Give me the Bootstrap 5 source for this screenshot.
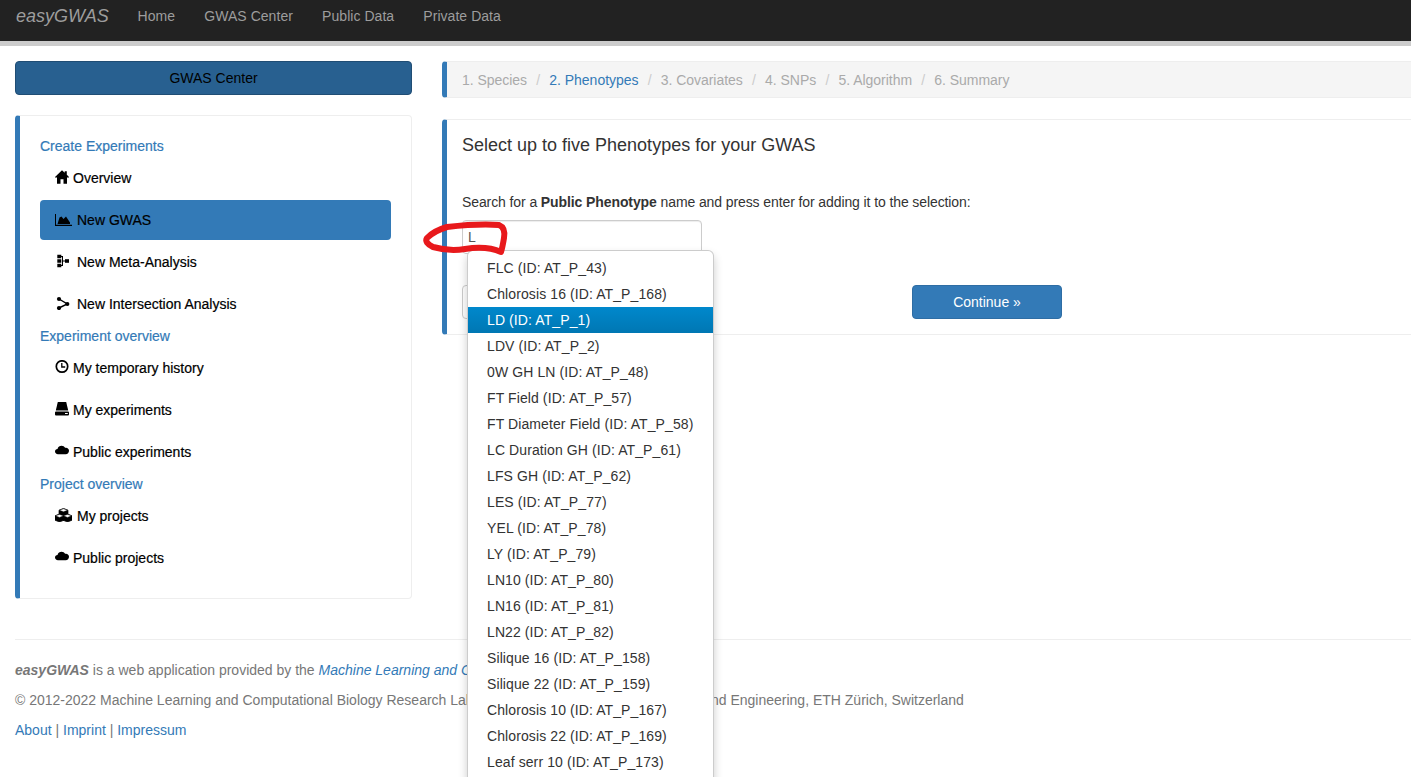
<!DOCTYPE html>
<html lang="en">
<head>
<meta charset="utf-8">
<title>easyGWAS</title>
<link rel="stylesheet" href="https://cdn.jsdelivr.net/npm/bootstrap@5.3.0/dist/css/bootstrap.min.css">
<style>
html,body{height:777px;overflow:hidden}
body{font-family:"Liberation Sans",Arial,sans-serif;font-size:14px;line-height:20px;color:#333;background:#fff;position:relative}
.topbar{background:#222;height:46px;border-bottom:5px solid #ccc;padding:0 15px;align-items:flex-start;flex-wrap:nowrap;justify-content:flex-start}
.topbar .navbar-brand{font-size:18px;font-style:italic;color:#9d9d9d;padding:6px 0 0;margin:0 13px 0 0;line-height:20px;width:94px}
.topbar.navbar-expand .navbar-nav .nav-link{color:#9d9d9d;padding:6px 14.6px 0;line-height:20px;letter-spacing:.04px}
.shell{padding:15px 15px 0;gap:30px;width:1600px}
.leftcol{width:397px;flex:none}
.titlebtn{display:block;width:100%;height:34px;background:#286090;border:1px solid #204d74;color:#000;font-size:14px;line-height:20px;padding:6px 12px;border-radius:4px;margin-bottom:20px}
.sidepanel{height:484px;border:1px solid #eee;border-left:5px solid #337ab7;border-radius:4px;padding:20px}
.sidehead{color:#337ab7;font-weight:400;font-size:14px;line-height:20px;margin:2px 0 0;-webkit-text-stroke:.2px #337ab7}
.sidehead:first-child{margin-top:0}
.sidepanel .nav-link{color:#000;height:40px;margin-top:2px;padding:10px 15px;line-height:20px;border-radius:4px;display:flex;align-items:center;-webkit-text-stroke:.2px #000}
.sidepanel .nav-link.active{background:#337ab7;color:#000}
.ico{flex:none;display:block;margin-right:4px;position:relative;top:-1px}
.ico.wide{margin-right:5px}
.maincol{width:1000px;flex:none}
.crumbs{height:37px;background:#f5f5f5;border-left:5px solid #337ab7;border-radius:4px;padding:8px 15px;margin:0 0 21px;color:#aaa;border-bottom:1px solid #eee;border-top:1px solid #eee}
.crumbs .breadcrumb{margin:0;--bs-breadcrumb-divider-color:#ccc;--bs-breadcrumb-item-padding-x:9.2px;line-height:20px;font-size:14px;letter-spacing:-.03px}
.crumbs .breadcrumb-item{color:#aaa}
.crumbs .breadcrumb-item::before{color:#ccc}
.crumbs .breadcrumb-item.current-step{color:#337ab7}
.stepbox{height:216px;border-top:1px solid #eee;border-bottom:1px solid #eee;border-left:5px solid #337ab7;border-radius:4px 0 0 4px;padding:0 15px;position:relative}
.stepbox h4{font-size:18px;font-weight:400;line-height:20px;color:#333;margin:15px 0 0}
.stepbox p{font-size:14px;line-height:20px;margin:37px 0 8px;letter-spacing:-.1px}
.stepbox .form-control{width:240px;height:34px;font-size:14px;padding:6px 5px;border-color:#ccc;border-radius:4px;color:#555;line-height:20px;box-shadow:inset 0 1px 1px rgba(0,0,0,.075)}
.btnrow{gap:300px;margin-top:31px}
.wizbtn{width:150px;height:34px;font-size:14px;line-height:20px;padding:6px 12px;border-radius:4px}
.wizbtn.backbtn{background:#fff;border:1px solid #ccc;color:#333}
.wizbtn.nextbtn{background:#337ab7;border:1px solid #2e6da4;color:#fff}
.footarea{width:1600px;margin:40px 15px 0;border-top:1px solid #eee;padding-top:20px;color:#777}
.footarea p{margin:0 0 10px;line-height:20px}
.footarea a{color:#337ab7;text-decoration:none}
.suggest{position:absolute;left:467px;top:250px;width:247px;margin:0;padding:4px 0 10px;border:1px solid rgba(0,0,0,.2);border-radius:6px;box-shadow:0 5px 10px rgba(0,0,0,.2);background:#fff;display:block;font-size:14px;min-width:0;z-index:10}
.suggest .dropdown-item{padding:3px 19px;line-height:20px;color:#333;font-size:14px;letter-spacing:.1px}
.suggest .dropdown-item.active{background:linear-gradient(#08c,#0077b3);color:#fff}
.scribble{position:absolute;left:415px;top:215px;z-index:20;pointer-events:none}
</style>
</head>
<body>
<nav class="navbar navbar-expand topbar p-0 px-3 d-flex">
  <a class="navbar-brand" href="#">easyGWAS</a>
  <ul class="navbar-nav flex-row">
    <li class="nav-item"><a class="nav-link" href="#">Home</a></li>
    <li class="nav-item"><a class="nav-link" href="#">GWAS Center</a></li>
    <li class="nav-item"><a class="nav-link" href="#">Public Data</a></li>
    <li class="nav-item"><a class="nav-link" href="#">Private Data</a></li>
  </ul>
</nav>
<div class="d-flex shell">
  <div class="leftcol">
    <button class="titlebtn" type="button">GWAS Center</button>
    <div class="sidepanel">
      <h6 class="sidehead">Create Experiments</h6>
      <ul class="nav flex-column">
        <li class="nav-item"><a class="nav-link" href="#"><svg class="ico" width="14" height="14" viewBox="0 0 14 14"><path d="M7 .2 0 7l1 1 1-1V13.800H5.500V9.200h3v4.600H12V7l1 1 1-1-2.200-2.200V1.200H9.700v1.500Z"/></svg>Overview</a></li>
        <li class="nav-item"><a class="nav-link active" href="#"><svg class="ico wide" width="17" height="14" viewBox="0 0 17 14"><path d="M0 2h1v10.800h16V14H0Z"/><path d="M2.500 12 4.500 5.500 6.500 4.500 8.500 7 11 4.500 15 10.500V12Z"/></svg>New GWAS</a></li>
        <li class="nav-item"><a class="nav-link" href="#"><svg class="ico wide" width="17" height="14" viewBox="0 0 17 14"><path d="M2.300 .8h4v3.400h-4ZM2.300 5.300h4v3.400h-4ZM2.300 9.800h4v3.400h-4Z"/><path d="M6 2h2v10H6v-1h1V3H6ZM7 6.500h3v1H7Z"/><path d="M10 5.200h4v3.600h-4Z"/></svg>New Meta-Analysis</a></li>
        <li class="nav-item"><a class="nav-link" href="#"><svg class="ico wide" width="17" height="14" viewBox="0 0 17 14"><circle cx="4" cy="3" r="2.100"/><circle cx="4" cy="12" r="2.100"/><circle cx="12.300" cy="8" r="2.100"/><path d="M4 3 12.300 8 4 12" fill="none" stroke="#000" stroke-width="1.400"/></svg>New Intersection Analysis</a></li>
      </ul>
      <h6 class="sidehead">Experiment overview</h6>
      <ul class="nav flex-column">
        <li class="nav-item"><a class="nav-link" href="#"><svg class="ico" width="14" height="14" viewBox="0 0 14 14"><circle cx="7" cy="6.500" r="5.700" fill="none" stroke="#000" stroke-width="1.700"/><path d="M6.800 3v4h3.400" fill="none" stroke="#000" stroke-width="1.300"/></svg>My temporary history</a></li>
        <li class="nav-item"><a class="nav-link" href="#"><svg class="ico" width="14" height="14" viewBox="0 0 14 14"><path d="M2.800 0h8.400L13.200 8.600H.8Z"/><path fill-rule="evenodd" d="M1 9.600h12q1 0 1 1v2q0 1-1 1H1q-1 0-1-1v-2q0-1 1-1ZM10 11v1h2.800v-1Z"/></svg>My experiments</a></li>
        <li class="nav-item"><a class="nav-link" href="#"><svg class="ico" width="14" height="14" viewBox="0 0 14 14"><path d="M3 10.200C1.200 10.200 0 9.100 0 7.600 0 6.200 1 5.100 2.500 5 3 3 4.700 1.800 6.600 1.800c1.500 0 2.800.8 3.500 2 .3-.1.600-.1.900-.1 1.700 0 3 1.300 3 3.100 0 1.900-1.400 3.400-3.300 3.400Z"/></svg>Public experiments</a></li>
      </ul>
      <h6 class="sidehead">Project overview</h6>
      <ul class="nav flex-column">
        <li class="nav-item"><a class="nav-link" href="#"><svg class="ico wide" width="17" height="14" viewBox="0 0 17 14"><g stroke="#000" stroke-width=".7" stroke-linejoin="round"><path d="M8.500.4 13 2.200v4.600L8.500 8.600 4 6.800V2.200Z" fill="#000"/><path d="M4.500 6 9 7.800v4.400L4.500 14 0 12.200V7.800Z" fill="#000"/><path d="M12.500 6 17 7.800v4.400L12.500 14 8 12.200V7.800Z" fill="#000"/><path d="M8.500.8 12.500 2.200 8.500 3.800 4.500 2.200ZM4.500 6.400 8.500 7.800 4.500 9.400.5 7.800ZM12.500 6.400 16.500 7.800 12.500 9.400 8.500 7.800Z" fill="#fff" stroke-width=".4"/></g></svg>My projects</a></li>
        <li class="nav-item"><a class="nav-link" href="#"><svg class="ico" width="14" height="14" viewBox="0 0 14 14"><path d="M3 10.200C1.200 10.200 0 9.100 0 7.600 0 6.200 1 5.100 2.500 5 3 3 4.700 1.800 6.600 1.800c1.500 0 2.800.8 3.500 2 .3-.1.600-.1.900-.1 1.700 0 3 1.300 3 3.100 0 1.900-1.400 3.400-3.300 3.400Z"/></svg>Public projects</a></li>
      </ul>
    </div>
  </div>
  <div class="maincol">
    <nav class="crumbs" aria-label="steps">
      <ol class="breadcrumb">
        <li class="breadcrumb-item">1. Species</li>
        <li class="breadcrumb-item current-step">2. Phenotypes</li>
        <li class="breadcrumb-item">3. Covariates</li>
        <li class="breadcrumb-item">4. SNPs</li>
        <li class="breadcrumb-item">5. Algorithm</li>
        <li class="breadcrumb-item">6. Summary</li>
      </ol>
    </nav>
    <div class="stepbox">
      <h4>Select up to five Phenotypes for your GWAS</h4>
      <p>Search for a <b>Public Phenotype</b> name and press enter for adding it to the selection:</p>
      <input class="form-control" type="text" value="L" aria-label="Phenotype">
      <div class="d-flex btnrow">
        <button class="btn wizbtn backbtn" type="button">&nbsp;</button>
        <button class="btn wizbtn nextbtn" type="button">Continue »</button>
      </div>
    </div>
  </div>
</div>
<footer class="footarea">
  <p><b><i>easyGWAS</i></b> is a web application provided by the <a href="#"><i>Machine Learning and Computational Biology Research Group</i></a></p>
  <p>© 2012-2022 Machine Learning and Computational Biology Research Lab, Department of Biosystems Science and Engineering, ETH Zürich, Switzerland</p>
  <p><a href="#">About</a> | <a href="#">Imprint</a> | <a href="#">Impressum</a></p>
</footer>
<ul class="dropdown-menu suggest">
  <li><a class="dropdown-item" href="#">FLC (ID: AT_P_43)</a></li>
  <li><a class="dropdown-item" href="#">Chlorosis 16 (ID: AT_P_168)</a></li>
  <li><a class="dropdown-item active" href="#">LD (ID: AT_P_1)</a></li>
  <li><a class="dropdown-item" href="#">LDV (ID: AT_P_2)</a></li>
  <li><a class="dropdown-item" href="#">0W GH LN (ID: AT_P_48)</a></li>
  <li><a class="dropdown-item" href="#">FT Field (ID: AT_P_57)</a></li>
  <li><a class="dropdown-item" href="#">FT Diameter Field (ID: AT_P_58)</a></li>
  <li><a class="dropdown-item" href="#">LC Duration GH (ID: AT_P_61)</a></li>
  <li><a class="dropdown-item" href="#">LFS GH (ID: AT_P_62)</a></li>
  <li><a class="dropdown-item" href="#">LES (ID: AT_P_77)</a></li>
  <li><a class="dropdown-item" href="#">YEL (ID: AT_P_78)</a></li>
  <li><a class="dropdown-item" href="#">LY (ID: AT_P_79)</a></li>
  <li><a class="dropdown-item" href="#">LN10 (ID: AT_P_80)</a></li>
  <li><a class="dropdown-item" href="#">LN16 (ID: AT_P_81)</a></li>
  <li><a class="dropdown-item" href="#">LN22 (ID: AT_P_82)</a></li>
  <li><a class="dropdown-item" href="#">Silique 16 (ID: AT_P_158)</a></li>
  <li><a class="dropdown-item" href="#">Silique 22 (ID: AT_P_159)</a></li>
  <li><a class="dropdown-item" href="#">Chlorosis 10 (ID: AT_P_167)</a></li>
  <li><a class="dropdown-item" href="#">Chlorosis 22 (ID: AT_P_169)</a></li>
  <li><a class="dropdown-item" href="#">Leaf serr 10 (ID: AT_P_173)</a></li>
</ul>
<svg class="scribble" width="100" height="45" viewBox="415 215 100 45" aria-hidden="true"><path d="M447 227C465 225 485 224 499 225 504 227 505 232 504 238 503 244 502 249 501 252 492 248 478 247 465 249 452 251 440 249 433 247 427 244 425 241 427 238 432 233 440 229 447 227Z" fill="none" stroke="#e8191c" stroke-width="6" stroke-linejoin="round"/></svg>
<script src="https://cdn.jsdelivr.net/npm/bootstrap@5.3.0/dist/js/bootstrap.bundle.min.js"></script>
</body>
</html>
